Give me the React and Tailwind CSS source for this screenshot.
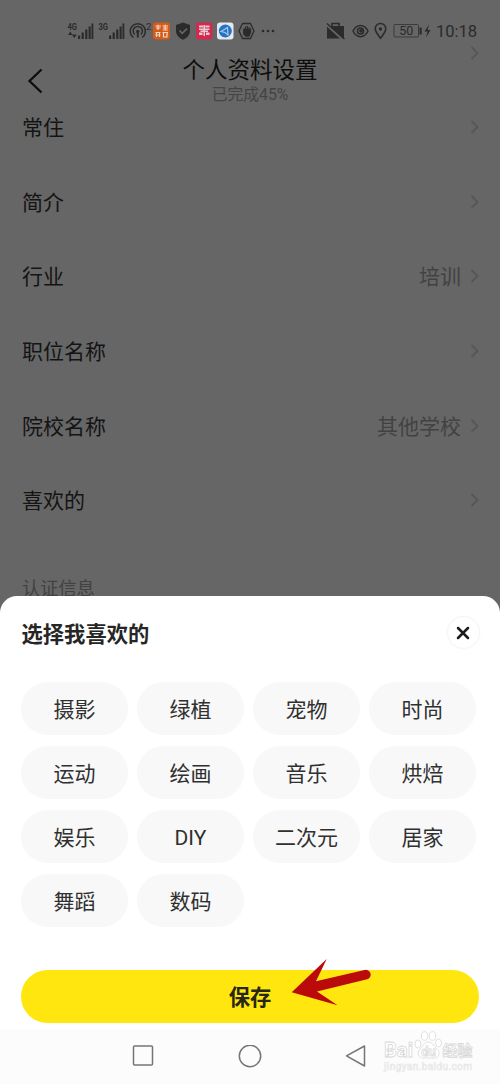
import React, { useState } from 'react';

const rows = [
    { label: '常住', value: '' },
    { label: '简介', value: '' },
    { label: '行业', value: '培训' },
    { label: '职位名称', value: '' },
    { label: '院校名称', value: '其他学校' },
    { label: '喜欢的', value: '' },
];

const hobbies = [
    '摄影', '绿植', '宠物', '时尚',
    '运动', '绘画', '音乐', '烘焙',
    '娱乐', 'DIY', '二次元', '居家',
    '舞蹈', '数码',
];

const Signal = ({ type }) => (
    <svg width="27" height="18" viewBox="0 0 27 18" fill="#2b2b2b">
        <text x="0.500" y="7.500" fontSize="9" fontWeight="bold" textLength="9.500" lengthAdjust="spacingAndGlyphs">{type}</text>
        {type === '4G' && <path d="M1 13l2.300-3.500L5.500 13zM4.800 12.500h5L7.300 16z" />}
        <path d="M11 13.500h2.200V17H11zM14.600 10.500h2.200V17h-2.200zM18.200 7.500h2.200V17h-2.200zM21.600 4.500h2.100V17h-2.100z" />
        <path d="M24.500 1.500h1.800V17h-1.800z" />
    </svg>
);

const Chevron = () => (
    <svg width="9" height="14" viewBox="0 0 9 14" fill="none" stroke="#575757" strokeWidth="1.8" className="mr-px shrink-0">
        <path d="M1.500 1L7.500 7L1.500 13" />
    </svg>
);

const StatusBar = () => (
    <div className="flex h-[44px] items-center pt-[17px] pl-[67px] pr-[23px]">
        <Signal type="4G" />
        <span className="w-[4px]" />
        <Signal type="3G" />
        {/* hotspot */}
        <svg className="ml-[4px]" width="23" height="18" viewBox="0 0 23 18" fill="none" stroke="#2b2b2b" strokeWidth="1.5">
            <path d="M4.500 15.500a7.600 7.600 0 1 1 8.600 0" />
            <path d="M5.800 12.500a4.600 4.600 0 1 1 6 0" />
            <circle cx="8.800" cy="9.500" r="1.700" fill="#2b2b2b" stroke="none" />
            <path d="M8.800 10v5.500" strokeWidth="2" />
            <text x="17" y="7.500" fontSize="9.500" fill="#2b2b2b" stroke="none">2</text>
        </svg>
        {/* notification app icons */}
        <svg className="ml-[1px]" width="17" height="18" viewBox="0 0 17 18">
            <rect y="0.500" width="17" height="17" rx="3" fill="#d85a17" />
            <path d="M2.500 4h5.500M5 2.800V8M3 6h4.500M9.500 4H15M12.200 2.800V8M9.800 6h5M9.800 8h5M2.500 10.500h5M3.500 10.500V15M6.500 10.500V15M2.500 13h5M9.500 10.500H15M10.500 10.500V15H14v-4.500" fill="none" stroke="#efd9cb" strokeWidth="1.200" />
        </svg>
        <svg className="ml-[5px]" width="16" height="18" viewBox="0 0 16 18">
            <path d="M8 0.500l7 2.500v6c0 4-3 7-7 8.800C4 16 1 13 1 9V3z" fill="#2b2b2b" />
            <path d="M4.500 8.500l2.700 2.800L12 6.600" fill="none" stroke="#666" strokeWidth="1.700" />
        </svg>
        <svg className="ml-[5px]" width="17" height="18" viewBox="0 0 17 18">
            <rect y="0.500" width="16.500" height="17" rx="3" fill="#d3294f" />
            <path d="M3 3.500h4.200v2H3zM9.300 3.500h4.200v2H9.300zM3 6.500h10.500v1.500H3zM7.500 3h1.500v11H7.500zM3 10.500h3.500V13H3zM10 10.500h3.500V13H10zM4.500 8.500h7.500V10H4.500z" fill="#e9cbd4" />
        </svg>
        <svg className="ml-[4px]" width="17" height="18" viewBox="0 0 17 18">
            <rect y="0.500" width="16.500" height="17" rx="3" fill="#e4eaf1" />
            <circle cx="8.300" cy="9" r="6.500" fill="#2772c5" />
            <path d="M4 9.500L10.500 5.500l0.500 7.500-3-2.500z" fill="none" stroke="#a8c9ec" strokeWidth="1.200" />
        </svg>
        <svg className="ml-[4px]" width="17" height="18" viewBox="0 0 17 18">
            <path d="M4.500 1.500h8L16 9l-3.500 7.500h-8L1 9z" fill="none" stroke="#2b2b2b" strokeWidth="1.300" strokeLinejoin="round" />
            <path d="M5.800 7v5l2 2h3l1.700-3.500V7M7.500 5v6M9.300 4.500v6M11 5.500v6" fill="#2b2b2b" stroke="#2b2b2b" strokeWidth="1.300" strokeLinecap="round" />
        </svg>
        <svg className="ml-[6px]" width="14" height="18" viewBox="0 0 14 18" fill="#2b2b2b">
            <circle cx="2" cy="9" r="1.300" />
            <circle cx="7" cy="9" r="1.300" />
            <circle cx="12" cy="9" r="1.300" />
        </svg>

        <div className="ml-auto flex items-center">
            <svg width="19" height="18" viewBox="0 0 19 18">
                <path d="M1 4h17v12.500H1z" fill="#2b2b2b" />
                <path d="M6 4V1.500h7V4" fill="none" stroke="#2b2b2b" strokeWidth="1.600" />
                <path d="M0 2.500L17 18" stroke="#666" strokeWidth="2" />
                <path d="M1 1.500l17.500 15.500" stroke="#2b2b2b" strokeWidth="1.300" />
            </svg>
            <svg className="ml-[7px]" width="17" height="18" viewBox="0 0 17 18" fill="none" stroke="#2b2b2b" strokeWidth="1.500">
                <path d="M1 9c3.500-7.500 11.500-7.500 15 0c-3.500 7.500-11.500 7.500-15 0z" />
                <circle cx="8.500" cy="9" r="3.100" />
                <circle cx="9" cy="8.800" r="1.900" fill="#2b2b2b" stroke="none" />
            </svg>
            <svg className="ml-[5px]" width="13" height="18" viewBox="0 0 13 18">
                <path d="M6.500 16.200C3.500 12.500 1.200 9.500 1.200 6.800a5.300 5.300 0 0 1 10.600 0c0 2.700-2.300 5.700-5.300 9.400z" fill="none" stroke="#2b2b2b" strokeWidth="1.600" />
                <circle cx="6.500" cy="7" r="1.700" fill="#2b2b2b" />
            </svg>
            <svg className="ml-[6px]" width="40" height="18" viewBox="0 0 40 18" fill="#2b2b2b">
                <rect x="1" y="2.500" width="24.500" height="12.500" rx="1" fill="none" stroke="#3b3b3b" strokeWidth="1" />
                <path d="M26.500 5.500h2.200v7h-2.200z" />
                <text x="13.200" y="13.300" fontSize="12.500" textAnchor="middle">50</text>
                <path d="M36 2.500l-4.500 7h3l-1.500 6 4.500-7.500h-3z" />
            </svg>
            <span className="ml-[3px] pt-[3px] text-[16.500px] leading-none text-[#2b2b2b]">10:18</span>
        </div>
    </div>
);

const Header = () => (
    <div className="flex h-[60px] items-start pr-5">
        <div className="flex-1">
            <svg className="mt-[24px] ml-[27px]" width="16" height="26" viewBox="0 0 16 26" fill="none" stroke="#0d0d0d" strokeWidth="2.300">
                <path d="M14.500 1.500L2.500 13l12 11.500" />
            </svg>
        </div>
        <div className="ml-5 flex flex-col items-center pt-[13px]">
            <h1 className="text-[22.500px] leading-[26px] text-[#0d0d0d]">个人资料设置</h1>
            <p className="pt-px text-[15.800px] leading-[22px] text-[#444]">已完成45%</p>
        </div>
        <div className="flex flex-1 justify-end pt-[2px]">
            <Chevron />
        </div>
    </div>
);

const Paw = () => (
    <svg width="28" height="28" viewBox="0 0 28 28" fill="#fff" stroke="#dedede" strokeWidth="0.900">
        <ellipse cx="4" cy="13" rx="3" ry="4" />
        <ellipse cx="10.500" cy="5" rx="3.200" ry="4.300" />
        <ellipse cx="18.500" cy="5" rx="3.200" ry="4.300" />
        <ellipse cx="24.500" cy="12" rx="3" ry="4" />
        <path d="M14 11c-4 0-4 4-8 7c-4 4-1 9 3 9h11c5 0 7-5 3-9c-4-3-4-7-9-7z" />
        <text x="14.500" y="24.500" fontSize="13" fontWeight="bold" textAnchor="middle">du</text>
    </svg>
);

const NavBar = () => (
    <div className="relative flex h-[55px] items-center bg-[#fcfcfc]">
        <svg className="ml-[132px]" width="22" height="24" viewBox="0 0 22 24" fill="none" stroke="#757575" strokeWidth="1.500">
            <rect x="1.500" y="1" width="19" height="19" rx="1" />
        </svg>
        <svg className="ml-[84px]" width="24" height="24" viewBox="0 0 24 24" fill="none" stroke="#757575" strokeWidth="1.500">
            <circle cx="12" cy="11" r="10.700" />
        </svg>
        <svg className="ml-[83px]" width="22" height="24" viewBox="0 0 22 24" fill="none" stroke="#757575" strokeWidth="1.500" strokeLinejoin="round">
            <path d="M19.500 1v20L1.500 10.800z" />
        </svg>

        {/* watermark */}
        <div className="absolute top-[2px] left-[383px] w-[92px]">
            <div className="flex h-[28px] items-end">
                <svg className="overflow-visible" width="31" height="28" viewBox="0 0 31 28" fill="#fff" stroke="#d8d8d8" strokeWidth="0.800">
                    <text x="1" y="26" fontSize="21" fontWeight="bold" textLength="29" lengthAdjust="spacingAndGlyphs">Bai</text>
                </svg>
                <Paw />
                <svg width="31" height="28" viewBox="0 0 31 28" fill="#fff" stroke="#d8d8d8" strokeWidth="0.800">
                    <text x="0.500" y="24.500" fontSize="15" fontWeight="bold">经验</text>
                </svg>
            </div>
            <svg className="mt-[2px]" width="92" height="12" viewBox="0 0 92 12" fill="#fff" stroke="#e6e6e6" strokeWidth="0.600">
                <text x="1" y="8.500" fontSize="10" textLength="88">jingyan.baidu.com</text>
            </svg>
        </div>
    </div>
);

const App = () => {
    const [selected, setSelected] = useState([]);

    const toggle = (name) => {
        setSelected(prev => prev.includes(name) ? prev.filter(n => n !== name) : [...prev, name]);
    };

    return (
        <div className="flex h-[1084px] w-[500px] flex-col overflow-hidden bg-[#666] font-[Roboto,'Noto_Sans_CJK_SC',sans-serif]">
            <div className="h-[600px] shrink-0">
                <StatusBar />
                <Header />
                <div className="-mt-[14.500px]">
                    {rows.map(row => (
                        <div key={row.label} className="flex h-[74.700px] items-center pr-5 pl-[22px] text-[21px] leading-none">
                            <span className="pt-[3px] text-[#141414]">{row.label}</span>
                            <span className="mr-[9px] ml-auto pt-[3px] text-[#424242]">{row.value}</span>
                            <Chevron />
                        </div>
                    ))}
                </div>
                <p className="pt-[39.500px] pl-[22px] text-[18.200px] leading-[23px] text-[#424242]">认证信息</p>
            </div>

            <div className="z-10 -mt-[4px] flex flex-1 flex-col rounded-t-[17px] bg-white">
                <div className="flex h-[86px] items-start justify-between pt-[20px] pr-5 pl-[21.500px]">
                    <h2 className="pt-[3px] text-[21.300px] leading-[32px] font-bold text-[#262626]">选择我喜欢的</h2>
                    <button className="flex size-[33px] items-center justify-center rounded-full border border-[#f5f5f5] shadow-[0_0_2px_#f3f3f3]">
                        <svg className="-ml-px" width="14" height="14" viewBox="0 0 14 14" stroke="#1c1c1c" strokeWidth="2.500" strokeLinecap="round">
                            <path d="M2 2l10 10M12 2L2 12" />
                        </svg>
                    </button>
                </div>

                <div className="grid grid-cols-4 gap-x-[9px] gap-y-[11.500px] pr-[24px] pl-[21px]">
                    {hobbies.map(name => (
                        <button
                            key={name}
                            onClick={() => toggle(name)}
                            className={`h-[52.500px] rounded-full pt-[5px] text-[21px] leading-none text-[#303030] ${selected.includes(name) ? 'bg-[#ffe60f]' : 'bg-[#f8f8f8]'}`}
                        >
                            {name}
                        </button>
                    ))}
                </div>

                <div className="relative mt-auto mb-[6px] px-[21px]">
                    <button className="h-[53px] w-full rounded-full bg-[#ffe60f] pt-[2px] text-[21.300px] leading-none font-bold text-[#262613]">
                        保存
                    </button>
                    {/* pointer to the save button */}
                    <svg className="absolute top-[-12px] left-[290px]" width="82" height="50" viewBox="0 0 82 50">
                        <path d="M1.700 34.300L36.700 1L26 23.300L74.500 12a4.700 4.700 0 0 1 2.700 9.300L27 33.500L47.500 47.300z" fill="#bb0a0c" />
                    </svg>
                </div>
            </div>

            <NavBar />
        </div>
    );
};

export default App;
